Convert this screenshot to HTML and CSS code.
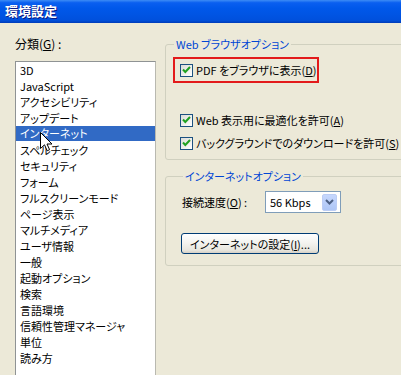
FILE: index.html
```html
<!DOCTYPE html>
<html lang="ja">
<head>
    <meta charset="UTF-8">
    <title>環境設定</title>
    <link rel="stylesheet" href="styles.css">
</head>
<body>
    <div class="window">
        <div class="titlebar">環境設定</div>

        <div class="content">
            <div class="left">
                <div class="label">分類(<u>G</u>) :</div>
                <div class="listbox">
                    <div class="item">3D</div>
                    <div class="item">JavaScript</div>
                    <div class="item">アクセシビリティ</div>
                    <div class="item">アップデート</div>
                    <div class="item selected">インターネット</div>
                    <div class="item">スペルチェック</div>
                    <div class="item">セキュリティ</div>
                    <div class="item">フォーム</div>
                    <div class="item">フルスクリーンモード</div>
                    <div class="item">ページ表示</div>
                    <div class="item">マルチメディア</div>
                    <div class="item">ユーザ情報</div>
                    <div class="item">一般</div>
                    <div class="item">起動オプション</div>
                    <div class="item">検索</div>
                    <div class="item">言語環境</div>
                    <div class="item">信頼性管理マネージャ</div>
                    <div class="item">単位</div>
                    <div class="item">読み方</div>
                </div>
                <!-- mouse pointer over the selected item -->
                <svg class="cursor" width="13" height="20" viewBox="0 0 13 20">
                    <path d="M0.5 0.5 L0.5 16.5 L4.5 12.8 L7.2 18.8 L9.6 17.7 L7 12 L12 12 Z" fill="#fff" stroke="#000" stroke-width="1"/>
                </svg>
            </div>

            <div class="right">
                <fieldset class="group web">
                    <legend>Web ブラウザオプション</legend>
                    <div class="highlight">
                        <span class="check"></span>
                        <span>PDF をブラウザに表示(<u>D</u>)</span>
                    </div>
                    <div class="option first">
                        <span class="check"></span>
                        <span>Web 表示用に最適化を許可(<u>A</u>)</span>
                    </div>
                    <div class="option">
                        <span class="check"></span>
                        <span>バックグラウンドでのダウンロードを許可(<u>S</u>)</span>
                    </div>
                </fieldset>

                <fieldset class="group net">
                    <legend>インターネットオプション</legend>
                    <div class="speed-row">
                        <span class="speed-label">接続速度(<u>O</u>) :</span>
                        <div class="combo">
                            <span class="combo-value">56 Kbps</span>
                            <span class="combo-btn">
                                <svg width="9" height="6" viewBox="0 0 9 6">
                                    <path d="M1 1 L4.5 4.5 L8 1" fill="none" stroke="#4d6185" stroke-width="2"/>
                                </svg>
                            </span>
                        </div>
                    </div>
                    <button class="button">インターネットの設定(<u>I</u>)...</button>
                </fieldset>
            </div>
        </div>
    </div>
</body>
</html>
```

FILE: styles.css
```css
body {
    margin: 0;
    overflow: hidden;
    background-color: #ece9d8;
    font-family: "Noto Sans CJK JP", sans-serif;
    font-size: 11px;
    font-feature-settings: "palt";
    color: #000;
}
u {
    text-decoration: underline;
    text-underline-offset: 1px;
}
.window {
    width: 401px;
    height: 375px;
    overflow: hidden;
}
.titlebar {
    height: 23px;
    line-height: 22px;
    padding-left: 5px;
    box-sizing: border-box;
    color: white;
    font-weight: bold;
    font-size: 13px;
    text-shadow: 1px 1px 0 #0a1883;
    background: linear-gradient(#3d8cf5 0%, #0a5ff0 12%, #0058ea 35%, #0054e3 65%, #0050dc 88%, #003cb8 100%);
}
.content {
    display: flex;
    gap: 9px;
}
.left {
    position: relative;
    padding-left: 15px;
    width: 141px;
    flex-shrink: 0;
}
.label {
    margin-top: 14px;
    line-height: 14px;
    height: 14px;
    margin-bottom: 10px;
    font-size: 12px;
}
.listbox {
    border: 1px solid #8f9394;
    border-right-color: #b9b9b0;
    background: white;
    height: 330px;
}
.item {
    height: 16px;
    line-height: 16px;
    padding-left: 4px;
    white-space: nowrap;
}
.item.selected {
    background-color: #316ac5;
    color: white;
    height: 15px;
    line-height: 15px;
    margin-bottom: 1px;
}
.cursor {
    position: absolute;
    left: 40px;
    top: 109px;
}
.right {
    flex: 1;
    margin-right: -20px;
}
.group {
    border: 1px solid #d0d0bf;
    border-radius: 3px;
    margin: 0;
    padding: 0 0 0 7px;
}
.group legend {
    color: #0046d5;
    padding: 0 2px;
    margin-left: 1px;
    line-height: 14px;
}
.web {
    margin-top: 14px;
    padding-top: 6px;
    padding-bottom: 9px;
}
.highlight {
    width: 146px;
    height: 26px;
    box-sizing: border-box;
    border: 2px solid #e31b1b;
    padding: 5px 0 0 5px;
    display: flex;
    align-items: flex-start;
    gap: 3px;
    white-space: nowrap;
    line-height: 13px;
}
.option {
    display: flex;
    align-items: center;
    gap: 3px;
    margin-left: 7px;
    margin-top: 10px;
    height: 13px;
    line-height: 13px;
    white-space: nowrap;
}
.option.first {
    margin-top: 31px;
}
.check {
    width: 13px;
    height: 13px;
    box-sizing: border-box;
    border: 1px solid #1c5180;
    flex-shrink: 0;
    background:
        url("data:image/svg+xml,%3Csvg xmlns='http://www.w3.org/2000/svg' width='11' height='11'%3E%3Cpath d='M2 4.5 L4.3 7 L9 2' fill='none' stroke='%2321a121' stroke-width='2'/%3E%3C/svg%3E") no-repeat center,
        linear-gradient(135deg, #dcdcd7, #ffffff);
}
.net {
    margin-top: 9px;
    padding-left: 16px;
    padding-top: 8px;
    padding-bottom: 11px;
}
.speed-row {
    display: flex;
    align-items: center;
}
.speed-label {
    width: 83px;
}
.combo {
    width: 76px;
    height: 22px;
    box-sizing: border-box;
    border: 1px solid #7f9db9;
    background: white;
    display: flex;
    align-items: center;
    justify-content: space-between;
    padding: 1px 3px 1px 4px;
}
.combo-btn {
    width: 15px;
    height: 17px;
    box-sizing: border-box;
    border: 1px solid #bccdf5;
    border-radius: 2px;
    background: linear-gradient(#c6d7fd, #aec6f6);
    display: flex;
    align-items: center;
    justify-content: center;
}
.button {
    margin-top: 20px;
    margin-left: -1px;
    width: 138px;
    height: 21px;
    border: 1px solid #003c74;
    border-radius: 3px;
    background: linear-gradient(#ffffff 0%, #f4f4f0 45%, #e8e6de 85%, #d6d0c5 100%);
    font-family: inherit;
    font-size: 11px;
    font-feature-settings: "palt";
    padding: 0;
    color: #000;
}
```
